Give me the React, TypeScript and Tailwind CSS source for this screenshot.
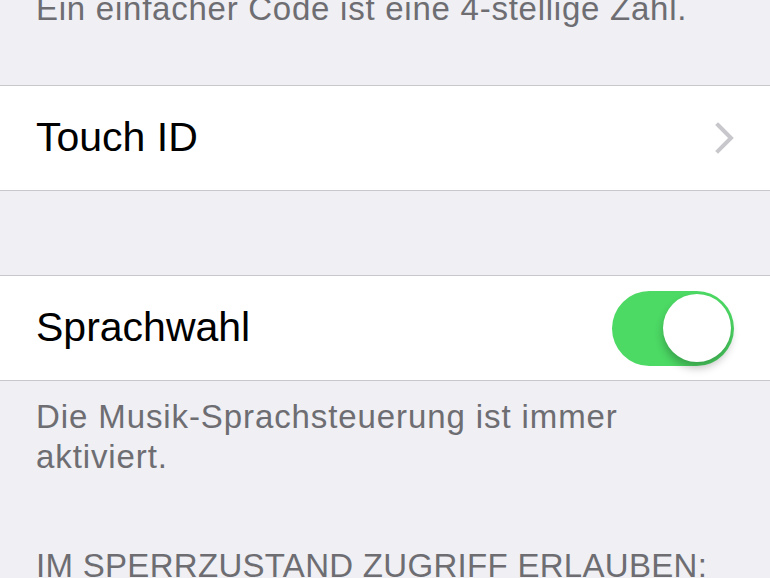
export default function App() {
  return (
    <div
      className="h-[578px] w-[770px] overflow-hidden bg-[#efeff4]"
      style={{ fontFamily: '"Liberation Sans", Arial, sans-serif' }}
    >
      <p className="mt-[-11px] whitespace-nowrap pl-9 text-[33px] leading-[40px] tracking-[0.75px] text-[#6d6d72]">
        Ein einfacher Code ist eine 4-stellige Zahl.
      </p>

      <div className="mt-[56px] flex h-[106px] items-center justify-between border-y border-[#c8c7cc] bg-white pl-9 pr-9">
        <span className="text-[41px] text-black">Touch ID</span>
        <svg width="20" height="32" viewBox="0 0 20 32" className="mr-[-1px]">
          <path d="M3 3 L16 16 L3 29" fill="none" stroke="#c7c7cc" strokeWidth="4" strokeLinecap="square" />
        </svg>
      </div>

      <div className="mt-[84px] flex h-[106px] items-center justify-between border-y border-[#c8c7cc] bg-white pl-9 pr-9">
        <span className="text-[41px] text-black">Sprachwahl</span>
        <div className="flex h-[75px] w-[122px] items-center justify-end rounded-full bg-[#4cd964] pr-[3px]">
          <div className="h-[68px] w-[68px] rounded-full bg-white shadow-[0_6px_8px_rgba(0,0,0,0.25)]" />
        </div>
      </div>

      <p className="pl-9 pr-9 pt-4 text-[33px] leading-[40px] tracking-[0.9px] text-[#6d6d72]">
        Die Musik-Sprachsteuerung ist immer
        <br />
        aktiviert.
      </p>

      <p className="mt-[69px] whitespace-nowrap pl-9 text-[33px] leading-[40px] tracking-[0.3px] text-[#6d6d72]">
        IM SPERRZUSTAND ZUGRIFF ERLAUBEN:
      </p>
    </div>
  );
}
